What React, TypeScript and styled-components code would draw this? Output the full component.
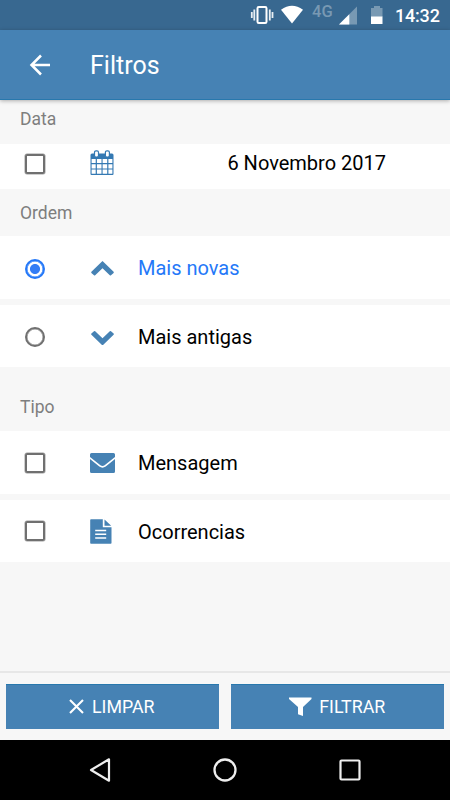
import React, { useState } from "react";
import styled, { createGlobalStyle } from "styled-components";

const BLUE = "#4682b4";
const ACTIVE = "#2478f8";

const GlobalStyle = createGlobalStyle`
  * { box-sizing: border-box; }
  body { margin: 0; background: #f7f7f7; font-family: Roboto, "Noto Sans", sans-serif; }
  svg { display: block; flex: none; }
`;

const Screen = styled.div`
  width: 450px;
  height: 800px;
  display: flex;
  flex-direction: column;
  overflow: hidden;
  background: #f7f7f7;
`;

const StatusBar = styled.div`
  height: 30px;
  flex: none;
  display: flex;
  background: #386890;
  color: #fff;
  padding-left: 250px;
`;

const Clock = styled.span`
  font-size: 18px;
  font-weight: 500;
  line-height: 32px;
  margin-left: 12px;
  letter-spacing: -0.2px;
`;

const Network = styled.span`
  width: 27px;
  padding-left: 1px;
  font-size: 16.5px;
  font-weight: 500;
  line-height: 23px;
  color: #7899b3;
`;

const Header = styled.header`
  height: 70px;
  flex: none;
  display: flex;
  align-items: center;
  padding-left: 29px;
  background: ${BLUE};
  border-bottom: 1px solid #2878ad;
  box-shadow: 0 1px 4px rgba(0, 0, 0, 0.3);
  position: relative;
`;

const Title = styled.h1`
  margin: 1px 0 0 39px;
  font-size: 25px;
  font-weight: 400;
  color: #fff;
`;

const Content = styled.main`
  flex: 1;
`;

const SectionTitle = styled.h2<{ $height: number; $top: number }>`
  margin: 0;
  height: ${(p) => p.$height}px;
  padding: ${(p) => p.$top}px 0 0 20px;
  font-size: 17.5px;
  line-height: 20px;
  font-weight: 400;
  color: #7e7e7e;
`;

const Row = styled.label<{ $compact?: boolean; $height?: number }>`
  display: flex;
  align-items: center;
  height: ${(p) => (p.$compact ? 45 : p.$height ?? 63)}px;
  padding: 0 64px ${(p) => (p.$compact ? 7 : 0)}px 25px;
  background: #fff;
`;

const Group = styled.div`
  display: flex;
  flex-direction: column;
  gap: 6px;
`;

const Checkbox = styled.input<{ $drop?: boolean }>`
  appearance: none;
  width: 20px;
  height: 20px;
  margin: ${(p) => (p.$drop ? 1 : 0)}px 0 0;
  flex: none;
  border: 2px solid #707070;
  border-radius: 2px;
  box-shadow: 0 0 0 0.5px #a0a0a0;
`;

const Radio = styled.input`
  appearance: none;
  width: 20px;
  height: 20px;
  margin: 2px 0 0;
  flex: none;
  border: 2px solid #707070;
  border-radius: 50%;
  box-shadow: inset 0 0 0 0.5px #909090;
  &:checked {
    border-color: ${ACTIVE};
    box-shadow: inset 0 0 0 0.5px ${ACTIVE};
    background: radial-gradient(circle, #347df5 4.6px, transparent 5.4px);
  }
`;

const IconCell = styled.span`
  width: 48px;
  margin-left: 45px;
  flex: none;
`;

const RowText = styled.span<{ $active?: boolean; $end?: boolean; $drop?: boolean }>`
  flex: 1;
  font-size: 20px;
  line-height: 24px;
  padding-top: ${(p) => (p.$drop ? 2 : 0)}px;
  text-align: ${(p) => (p.$end ? "right" : "left")};
  color: ${(p) => (p.$active ? ACTIVE : "#000")};
`;

const Footer = styled.footer`
  height: 69px;
  flex: none;
  display: grid;
  grid-template-columns: 1fr 1fr;
  gap: 12px;
  padding: 11px 6px;
  border-top: 2px solid #e7e7e7;
`;

const ActionButton = styled.button`
  height: 45px;
  display: flex;
  align-items: center;
  justify-content: center;
  gap: 7.5px;
  padding: 0 1px 1px 0;
  border: 0;
  border-top: 1px solid #2878ad;
  background: ${BLUE};
  color: #fff;
  font: 400 17.8px Roboto, sans-serif;
`;

const NavBar = styled.nav`
  height: 60px;
  flex: none;
  display: grid;
  grid-template-columns: repeat(3, 125px);
  justify-content: center;
  justify-items: center;
  align-items: center;
  background: #000;
`;

const StatusIcons = () => (
  <svg width="61" height="30" viewBox="250 0 61 30" fill="none">
    <rect x="257.5" y="7" width="9" height="16" rx="1.3" stroke="#fff" strokeWidth="2" />
    <path d="M254.3 9.5v11M269.8 9.5v11M251.8 12v6M272.5 12v6" stroke="#e7eef3" strokeWidth="1.8" />
    <path d="M281 9.7Q292 1.9 303 9.7L292 23.4Z" fill="#fff" />
  </svg>
);

const SignalIcons = () => (
  <svg width="45" height="30" viewBox="338 0 45 30">
    <path d="M339 24.5 357 6.5v18z" fill="#7899b3" />
    <path d="M339 24.5 349.3 14.2v10.3z" fill="#fff" />
    <path d="M374 6h6v2h2.5v9H371V8h3z" fill="#7899b3" />
    <path d="M371 16.5h11.5V24H371z" fill="#fff" />
  </svg>
);

const BackIcon = () => (
  <svg width="22" height="22" viewBox="29 54 22 22" fill="none" stroke="#fff" strokeWidth="2.5">
    <path d="M50 65H31.5M41 55.5 31.5 65l9.5 9.5" />
  </svg>
);

const CalendarIcon = () => (
  <svg width="24" height="26" viewBox="0 0 24 26">
    <path d="M2 3.5h20a1.5 1.5 0 0 1 1.5 1.5v19a1 1 0 0 1-1 1h-21a1 1 0 0 1-1-1V5A1.5 1.5 0 0 1 2 3.5Z" fill="#3479b3" />
    <path d="M1.6 9h4.1v4.1H1.6zM6.9 9h4.6v4.1H6.9zM12.6 9h4.6v4.1h-4.6zM18.4 9h4v4.1h-4zM1.6 14.2h4.1v4.2H1.6zM6.9 14.2h4.6v4.2H6.9zM12.6 14.2h4.6v4.2h-4.6zM18.4 14.2h4v4.2h-4zM1.6 19.6h4.1v4.2H1.6zM6.9 19.6h4.6v4.2H6.9zM12.6 19.6h4.6v4.2h-4.6zM18.4 19.6h4v4.2h-4z" fill="#fff" />
    <rect x="4.5" y=".8" width="4" height="6.3" rx="1.5" fill="#fff" stroke="#3479b3" strokeWidth="1.2" />
    <rect x="15.4" y=".8" width="4" height="6.3" rx="1.5" fill="#fff" stroke="#3479b3" strokeWidth="1.2" />
  </svg>
);

const ChevronIcon = ({ down }: { down?: boolean }) => (
  <svg width="25" height="18" viewBox="0 0 25 18" fill={BLUE}>
    <path
      transform={down ? "matrix(1 0 0 -1 0 20)" : "translate(0 .5)"}
      d="M12.5 1.5 23.6 12.2Q24.1 12.8 23.6 13.4L21 15.8Q20.4 16.3 19.8 15.8L12.5 8.8 5.2 15.8Q4.6 16.3 4 15.8L1.4 13.4Q.9 12.8 1.4 12.2Z"
    />
  </svg>
);

const EnvelopeIcon = () => (
  <svg width="25" height="20" viewBox="0 0 25 20" fill={BLUE}>
    <path d="M1.5 0h22A1.5 1.5 0 0 1 25 1.5V4l-10.4 8.2q-2.1 1.5-4.2 0L0 4V1.5A1.5 1.5 0 0 1 1.5 0Z" />
    <path d="m0 6 9.3 7.6q3.2 2.3 6.4 0L25 6v12.5a1.5 1.5 0 0 1-1.5 1.5h-22A1.5 1.5 0 0 1 0 18.5Z" />
  </svg>
);

const FileIcon = () => (
  <svg width="22" height="25" viewBox="0 0 22 25">
    <path d="M1 .2h11.8v8h8.7V24a.8.8 0 0 1-.8.8H1a.8.8 0 0 1-.8-.8V1A.8.8 0 0 1 1 .2ZM14.5.5l6.7 6.2h-6.7Z" fill={BLUE} />
    <path d="M5.2 11.5h11M5.2 15.2h11M5.2 19h11" stroke="#fff" strokeWidth="1.6" />
  </svg>
);

const CloseIcon = () => (
  <svg width="15" height="15" viewBox="0 0 15 15" stroke="#fff" strokeWidth="2.1">
    <path d="m1 1 13 13M14 1 1 14" />
  </svg>
);

const FunnelIcon = () => (
  <svg width="23" height="20" viewBox="0 0 23 20" fill="#fff">
    <path d="M0 .5h22.5V2L14 10v9L9 17.2V10L0 2Z" />
  </svg>
);

export default function App() {
  const [order, setOrder] = useState("new");
  return (
    <>
      <GlobalStyle />
      <Screen>
        <StatusBar>
          <StatusIcons />
          <Network>4G</Network>
          <SignalIcons />
          <Clock>14:32</Clock>
        </StatusBar>
        <Header>
          <BackIcon />
          <Title>Filtros</Title>
        </Header>
        <Content>
          <SectionTitle $height={44} $top={9}>Data</SectionTitle>
          <Row $compact>
            <Checkbox $drop type="checkbox" />
            <IconCell><CalendarIcon /></IconCell>
            <RowText $end>6 Novembro 2017</RowText>
          </Row>
          <SectionTitle $height={47} $top={14}>Ordem</SectionTitle>
          <Group>
            <Row>
              <Radio type="radio" name="order" checked={order === "new"} onChange={() => setOrder("new")} />
              <IconCell><ChevronIcon /></IconCell>
              <RowText $active={order === "new"}>Mais novas</RowText>
            </Row>
            <Row $height={62}>
              <Radio type="radio" name="order" checked={order === "old"} onChange={() => setOrder("old")} />
              <IconCell><ChevronIcon down /></IconCell>
              <RowText $drop $active={order === "old"}>Mais antigas</RowText>
            </Row>
          </Group>
          <SectionTitle $height={64} $top={30}>Tipo</SectionTitle>
          <Group>
            <Row>
              <Checkbox type="checkbox" />
              <IconCell><EnvelopeIcon /></IconCell>
              <RowText>Mensagem</RowText>
            </Row>
            <Row $height={62}>
              <Checkbox type="checkbox" />
              <IconCell><FileIcon /></IconCell>
              <RowText $drop>Ocorrencias</RowText>
            </Row>
          </Group>
        </Content>
        <Footer>
          <ActionButton><CloseIcon />LIMPAR</ActionButton>
          <ActionButton><FunnelIcon />FILTRAR</ActionButton>
        </Footer>
        <NavBar>
          <svg width="22" height="26" viewBox="0 0 22 26" fill="none" stroke="#eee" strokeWidth="2.2" strokeLinejoin="round">
            <path d="M20 2.3v21.4L2 13Z" />
          </svg>
          <svg width="24" height="24" viewBox="0 0 24 24" fill="none" stroke="#eee" strokeWidth="2.3">
            <circle cx="12" cy="12" r="10.5" />
          </svg>
          <svg width="22" height="22" viewBox="0 0 22 22" fill="none" stroke="#eee" strokeWidth="2.2">
            <rect x="1.5" y="1.5" width="19" height="19" rx="1" />
          </svg>
        </NavBar>
      </Screen>
    </>
  );
}
